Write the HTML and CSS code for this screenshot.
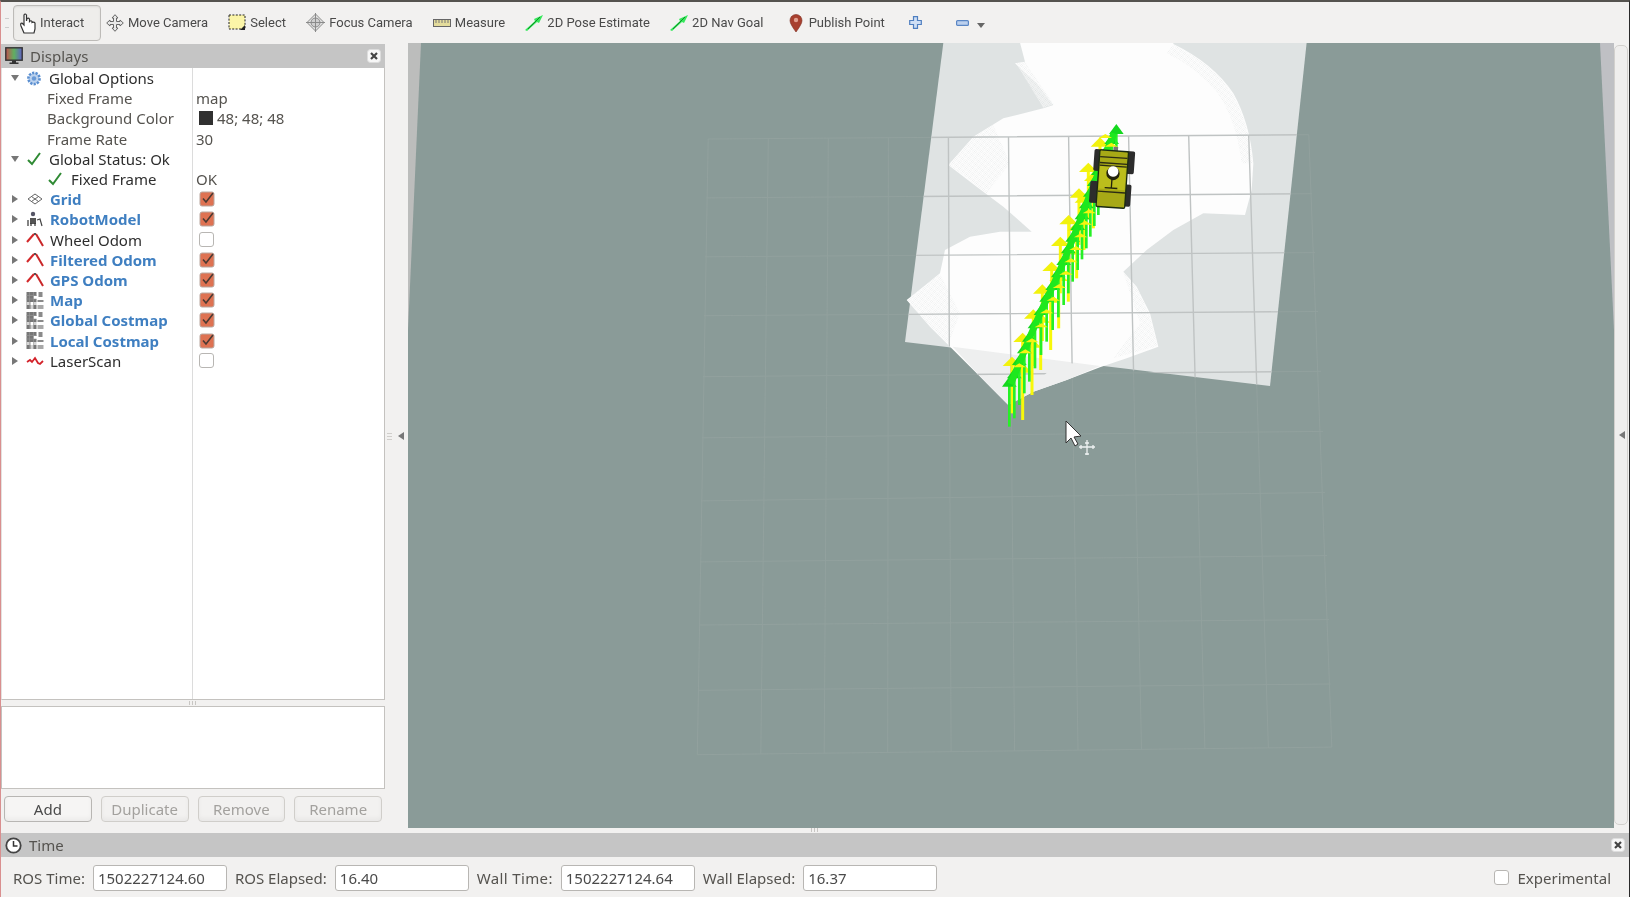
FILE: index.html
```html
<!DOCTYPE html>
<html lang="en">
<head>
    <meta charset="UTF-8">
    <title>RViz</title>
    <link rel="stylesheet" href="styles.css">
</head>
<body>
    <!-- shared icons -->
    <svg class="defs" width="0" height="0">
        <defs>
            <symbol id="i-odom" viewBox="0 0 18 16">
                <path d="M1 10 L8 2" stroke="#d3282a" stroke-width="2" fill="none"/>
                <path d="M10 2 L17 14" stroke="#c9282a" stroke-width="2" fill="none"/>
                <path d="M8 2 L10 2" stroke="#555" stroke-width="2"/>
            </symbol>
            <symbol id="i-map" viewBox="0 0 17 17">
                <path d="M0 0h10v4h-3v3h3v3h-6v3h6v4h-10z" fill="#777"/>
                <path d="M0 10h4v3h-4zM4 13h3v4h-3zM7 10h3v3h-3z" fill="#d4d4d4"/>
                <path d="M3 0v17M7 0v17M0 3.5h10M0 7h10" stroke="#999" stroke-width=".6"/>
                <path d="M12 0h4v5h-4zM11 8h6v2h-6z" fill="#8a8a8a"/>
                <path d="M11 13h6v4h-6z" fill="#a8a8a8"/>
            </symbol>
            <symbol id="i-check" viewBox="0 0 16 14">
                <path d="M2 8 L6 12 L14 1" stroke="#2f8a34" stroke-width="2" fill="none"/>
            </symbol>
            <symbol id="i-box" viewBox="0 0 16 16">
                <rect x="1" y="1" width="14" height="14" rx="2" fill="#de7252" stroke="#b9a79f"/>
                <path d="M4 7.5 L7 11 L14 2" stroke="#4b3a33" stroke-width="1.6" fill="none"/>
            </symbol>
            <symbol id="i-pose" viewBox="0 0 18 16">
                <path d="M0 15 L10 6 L9 4 L18 0 L14 8 L12 7 L2 16z" fill="#35e85a"/>
                <path d="M3 14 L15 2" stroke="#128a2a" stroke-width="1"/>
            </symbol>
            <symbol id="i-close" viewBox="0 0 14 14">
                <rect x="0.5" y="0.5" width="13" height="13" rx="3" fill="#f7f7f7" stroke="#ddd"/>
                <path d="M4 4 L10 10 M10 4 L4 10" stroke="#444" stroke-width="2.2"/>
            </symbol>
        </defs>
    </svg>

    <div class="app">
        <!-- Tool bar -->
        <div class="toolbar">
            <span class="grip"></span>
            <div class="tool tool-active">
                <svg width="18" height="22" viewBox="0 0 18 22"><path d="M5 21 L2 14 Q1 11 3 11 L5 13 L5 3 Q6 1 7.5 3 L7.5 9 L8 6.5 Q9.5 5.5 10.5 7 L10.5 9.5 Q12 8 13 9.5 L13 10.5 Q15 9.5 16 11 L16 17 L15 21z" fill="#fff" stroke="#333" stroke-width="1.2"/></svg>
                <span>Interact</span>
            </div>
            <div class="tool">
                <svg width="18" height="18" viewBox="0 0 18 18" fill="#e8e8e8" stroke="#666"><path d="M9 .7 L12 4 H10.5 V7.5 H14 V6 L17.3 9 L14 12 V10.5 H10.5 V14 H12 L9 17.3 L6 14 H7.5 V10.5 H4 V12 L.7 9 L4 6 V7.5 H7.5 V4 H6z"/></svg>
                <span>Move Camera</span>
            </div>
            <div class="tool">
                <svg width="18" height="17" viewBox="0 0 18 17"><rect x="1" y="1" width="16" height="14" fill="#fbf5a8" stroke="#222" stroke-dasharray="2 1.4"/><path d="M17 11v5h-5z" fill="#222"/></svg>
                <span>Select</span>
            </div>
            <div class="tool">
                <svg width="19" height="19" viewBox="0 0 19 19" fill="none" stroke="#8a8a8a"><path d="M9.5 1 L18 9.5 L9.5 18 L1 9.5z" fill="#e4e4e4"/><circle cx="9.5" cy="9.5" r="4.5" fill="#cfcfcf"/><path d="M9.5 0v19M0 9.5h19"/></svg>
                <span>Focus Camera</span>
            </div>
            <div class="tool">
                <svg width="18" height="10" viewBox="0 0 18 10"><rect x=".5" y="1.5" width="17" height="7" fill="#e4dc9c" stroke="#666"/><path d="M3 2v3M6 2v3M9 2v3M12 2v3M15 2v3" stroke="#777"/></svg>
                <span>Measure</span>
            </div>
            <div class="tool">
                <svg width="18" height="16"><use href="#i-pose"/></svg>
                <span>2D Pose Estimate</span>
            </div>
            <div class="tool">
                <svg width="18" height="16"><use href="#i-pose"/></svg>
                <span>2D Nav Goal</span>
            </div>
            <div class="tool tool-pin">
                <svg width="14" height="18" viewBox="0 0 14 18"><path d="M7 18 Q1 10 1 6.5 A6 6 0 0 1 13 6.5 Q13 10 7 18z" fill="#a8402f" stroke="#7c2a1f" stroke-width=".6"/><circle cx="7" cy="6" r="2.2" fill="#e0a090"/></svg>
                <span>Publish Point</span>
            </div>
            <svg class="tool-plus" width="13" height="13" viewBox="0 0 13 13"><path d="M4.5 .7h4v3.8h3.8v4h-3.8v3.8h-4v-3.8h-3.8v-4h3.8z" fill="#cfdff5" stroke="#4f7fc0" stroke-width="1.2"/></svg>
            <svg class="tool-minus" width="13" height="6" viewBox="0 0 13 6"><rect x=".6" y=".6" width="11.8" height="4.8" rx="1" fill="#bcd0ee" stroke="#5a86c4" stroke-width="1.2"/></svg>
            <span class="tool-caret"></span>
        </div>

        <div class="main">
            <!-- Displays panel -->
            <div class="dock">
                <div class="panel-title">
                    <svg width="18" height="18" viewBox="0 0 18 18">
                        <defs><linearGradient id="screen" x1="0" x2="1" y1="0" y2="0"><stop offset="0" stop-color="#c05050"/><stop offset=".5" stop-color="#60b060"/><stop offset="1" stop-color="#6060c8"/></linearGradient></defs>
                        <rect x=".8" y=".8" width="16.4" height="12.4" fill="url(#screen)" stroke="#333" stroke-width="1.4"/>
                        <path d="M7 13.5h4v2h2.5v1.5h-9v-1.5h2.5z" fill="#333"/>
                    </svg>
                    <span>Displays</span>
                    <svg class="close" width="14" height="14"><use href="#i-close"/></svg>
                </div>
                <div class="tree">
                    <div class="row">
                        <div class="name"><span class="exp exp-open"></span>
                            <svg class="ico" width="15" height="15" viewBox="0 0 15 15"><circle cx="7.5" cy="7.5" r="5.6" fill="#bcd2ee" stroke="#5b8fd0" stroke-width="2.6" stroke-dasharray="2.2 1.2"/><circle cx="7.5" cy="7.5" r="2.2" fill="#6a9ad6"/></svg>
                            <span class="label">Global Options</span></div>
                        <div class="value"></div>
                    </div>
                    <div class="row prop"><div class="name"><span class="label">Fixed Frame</span></div><div class="value">map</div></div>
                    <div class="row prop"><div class="name"><span class="label">Background Color</span></div><div class="value"><span class="swatch"></span>48; 48; 48</div></div>
                    <div class="row prop"><div class="name"><span class="label">Frame Rate</span></div><div class="value">30</div></div>
                    <div class="row">
                        <div class="name"><span class="exp exp-open"></span><svg class="ico" width="15" height="14"><use href="#i-check"/></svg><span class="label">Global Status: Ok</span></div>
                        <div class="value"></div>
                    </div>
                    <div class="row status">
                        <div class="name"><svg class="ico" width="15" height="14"><use href="#i-check"/></svg><span class="label">Fixed Frame</span></div>
                        <div class="value">OK</div>
                    </div>
                    <div class="row">
                        <div class="name"><span class="exp"></span>
                            <svg class="ico" width="16" height="12" viewBox="0 0 16 12" fill="none" stroke="#666"><path d="M8 1 L15 6 L8 11 L1 6z"/><path d="M4.5 3.5 L11.5 8.5M11.5 3.5 L4.5 8.5"/></svg>
                            <span class="label on">Grid</span></div>
                        <div class="value"><svg class="box" width="16" height="16"><use href="#i-box"/></svg></div>
                    </div>
                    <div class="row">
                        <div class="name"><span class="exp"></span>
                            <svg class="ico" width="16" height="16" viewBox="0 0 16 16"><circle cx="6" cy="3" r="2.2" fill="#556"/><rect x="3" y="7" width="6" height="6" fill="#555"/><path d="M1 15v-6M4 15v-3M8 15v-3" stroke="#333" stroke-width="1.2"/><path d="M10 9 L13 8 L15 15" stroke="#444" stroke-width="1.2" fill="none"/></svg>
                            <span class="label on">RobotModel</span></div>
                        <div class="value"><svg class="box" width="16" height="16"><use href="#i-box"/></svg></div>
                    </div>
                    <div class="row">
                        <div class="name"><span class="exp"></span><svg class="ico" width="18" height="16"><use href="#i-odom"/></svg><span class="label">Wheel Odom</span></div>
                        <div class="value"><span class="box-off"></span></div>
                    </div>
                    <div class="row">
                        <div class="name"><span class="exp"></span><svg class="ico" width="18" height="16"><use href="#i-odom"/></svg><span class="label on">Filtered Odom</span></div>
                        <div class="value"><svg class="box" width="16" height="16"><use href="#i-box"/></svg></div>
                    </div>
                    <div class="row">
                        <div class="name"><span class="exp"></span><svg class="ico" width="18" height="16"><use href="#i-odom"/></svg><span class="label on">GPS Odom</span></div>
                        <div class="value"><svg class="box" width="16" height="16"><use href="#i-box"/></svg></div>
                    </div>
                    <div class="row">
                        <div class="name"><span class="exp"></span><svg class="ico" width="17" height="17"><use href="#i-map"/></svg><span class="label on">Map</span></div>
                        <div class="value"><svg class="box" width="16" height="16"><use href="#i-box"/></svg></div>
                    </div>
                    <div class="row">
                        <div class="name"><span class="exp"></span><svg class="ico" width="17" height="17"><use href="#i-map"/></svg><span class="label on">Global Costmap</span></div>
                        <div class="value"><svg class="box" width="16" height="16"><use href="#i-box"/></svg></div>
                    </div>
                    <div class="row">
                        <div class="name"><span class="exp"></span><svg class="ico" width="17" height="17"><use href="#i-map"/></svg><span class="label on">Local Costmap</span></div>
                        <div class="value"><svg class="box" width="16" height="16"><use href="#i-box"/></svg></div>
                    </div>
                    <div class="row">
                        <div class="name"><span class="exp"></span>
                            <svg class="ico" width="18" height="10" viewBox="0 0 18 10"><path d="M1 6 L4 4 L6 6 L9 2 L12 7 L14 8 L17 5" stroke="#d3222a" stroke-width="1.8" fill="none"/></svg>
                            <span class="label">LaserScan</span></div>
                        <div class="value"><span class="box-off"></span></div>
                    </div>
                    <div class="tree-rest"><div class="name"></div></div>
                </div>
                <div class="hsplit"><span class="dots"></span></div>
                <div class="details"></div>
                <div class="buttons">
                    <button class="btn">Add</button>
                    <button class="btn" disabled>Duplicate</button>
                    <button class="btn" disabled>Remove</button>
                    <button class="btn" disabled>Rename</button>
                </div>
            </div>

            <div class="vsplit"><span class="dots-v"></span><span class="arrow-left"></span></div>

            <!-- 3D view -->
            <div class="view">
                <svg class="scene" viewBox="408 43 1206 785" width="1206" height="785">
                    <defs>
                        <clipPath id="seen-clip"><path d="M945 30 L1308 30 L1270 386 L1060 362 L1008 405 L948 345 L905 342z"/></clipPath>
                        <pattern id="dots" width="5" height="5" patternUnits="userSpaceOnUse" patternTransform="rotate(35)">
                            <rect width="5" height="5" fill="#fdfdfd"/>
                            <rect width="1.8" height="1.8" fill="#c6cccc"/>
                        </pattern>
                        <g id="grid">
                            <path d="M708.2 139L697.3 754.7M768.3 138.6L760.8 754M828.3 138.2L824.2 753.2M888.4 137.8L887.7 752.5M948.4 137.3L951.1 751.8M1008.5 136.9L1014.6 751M1068.6 136.5L1078 750.3M1128.6 136L1141.5 749.6M1188.7 135.6L1204.9 748.9M1248.7 135.2L1268.4 748.1M1308.8 134.7L1331.8 747.1"/>
                            <path d="M708.2 139L1308.8 134.7M706.5 197.9L1312 193.7M705 256.8L1315 252.6M704 315.7L1318 311.5M703 376.7L1321 371.3M702 437.8L1323 431.4M701 500.9L1325 492.5M700 561.9L1327 555.6M699 625L1329 619.6M698 690.3L1330.5 684M697.3 754.7L1331.8 747.1"/>
                        </g>
                        <g id="green">
                            <path d="M-4 20h8v130h-8z" fill="#26f026"/>
                            <path d="M0 0 L22 30 L-22 30z" fill="#14d81e"/>
                        </g>
                        <g id="yellow">
                            <path d="M-4.5 20h9v150h-9z" fill="#f8f80a"/>
                            <path d="M0 0 L28 28 L-28 28z" fill="#f2f20c"/>
                        </g>
                        <path id="step" d="M0 0 L20 12 L-20 12z" fill="#f4f410"/>
                    </defs>

                    <path class="edge" d="M408 43 H421 L408 330z"/>
                    <path class="edge edge-r" d="M1600 43 H1614 V330z"/>

                    <use href="#grid" class="grid-far"/>
                    <path class="map" d="M945 30 L1308 30 L1270 386 L905 342z"/>

                    <!-- traced in a zoomed coordinate space -->
                    <g transform="translate(880 30) scale(.33333)">
                        <path class="free" d="M410 0 L880 0 L880 42 Q1000 100 1060 190 Q1110 280 1120 400 L1115 480 L1095 555 L970 550 L880 600 L800 660 L730 725 L770 770 L810 850 L835 950 L740 985 L660 1012 L560 1050 L460 1085 L385 1125 L320 1060 L205 945 L150 890 L80 810 L130 770 L180 730 L195 660 L270 620 L360 605 L455 605 L370 530 L290 470 L205 405 L280 320 L370 265 L490 235 L520 225 L470 160 L405 100 L435 95z"/>
                        <path class="below" d="M218 950 L660 1008 L560 1050 L460 1085 L385 1125 L320 1060z"/>
                        <!-- dithered scan edges -->
                        <path class="fan" d="M207 405 L280 322 L340 285 L390 400 L320 490z"/>
                        <path class="fan" d="M82 810 L130 772 L180 732 L240 850 L205 943 L150 888z"/>
                        <path class="fan" d="M880 44 Q1000 102 1058 192 Q1108 282 1118 400 L1085 400 Q1070 280 1020 200 Q960 120 860 70z"/>
                        <path class="fan" d="M408 100 L436 97 L522 222 L490 233z"/>
                        <path class="fan" d="M730 728 L770 772 L808 852 L833 948 L700 985 L780 880z"/>
                    </g>

                    <use href="#grid" class="grid-near" clip-path="url(#seen-clip)"/>

                    <g transform="translate(880 30) scale(.33333)">
                        <!-- yellow poses, behind the green ones -->
                        <use href="#yellow" x="396" y="980"/>
                        <use href="#yellow" x="428" y="1000"/>
                        <use href="#yellow" x="428" y="908"/>
                        <use href="#yellow" x="456" y="925"/>
                        <use href="#yellow" x="460" y="838"/>
                        <use href="#yellow" x="482" y="850"/>
                        <use href="#yellow" x="487" y="763"/>
                        <use href="#yellow" x="512" y="790"/>
                        <use href="#yellow" x="515" y="695"/>
                        <use href="#yellow" x="536" y="725"/>
                        <use href="#yellow" x="541" y="620"/>
                        <use href="#yellow" x="565" y="645"/>
                        <use href="#yellow" x="566" y="555"/>
                        <use href="#yellow" x="590" y="575"/>
                        <use href="#yellow" x="597" y="475"/>
                        <use href="#yellow" x="612" y="490"/>
                        <use href="#yellow" x="625" y="398"/>
                        <use href="#yellow" x="640" y="425"/>
                        <use href="#yellow" x="660" y="322"/>

                        <!-- green poses -->
                        <use href="#green" x="388" y="1040"/>
                        <use href="#green" x="403" y="1015"/>
                        <use href="#green" x="418" y="975"/>
                        <use href="#green" x="433" y="940"/>
                        <use href="#green" x="448" y="905"/>
                        <use href="#green" x="465" y="865"/>
                        <use href="#green" x="483" y="825"/>
                        <use href="#green" x="500" y="785"/>
                        <use href="#green" x="518" y="750"/>
                        <use href="#green" x="535" y="712"/>
                        <use href="#green" x="551" y="675"/>
                        <use href="#green" x="565" y="640"/>
                        <use href="#green" x="578" y="605"/>
                        <use href="#green" x="593" y="570"/>
                        <use href="#green" x="606" y="538"/>
                        <use href="#green" x="619" y="505"/>
                        <use href="#green" x="631" y="470"/>
                        <use href="#green" x="643" y="438"/>
                        <use href="#green" x="655" y="405"/>
                        <use href="#green" x="668" y="375"/>
                        <use href="#green" x="681" y="342"/>
                        <use href="#green" x="695" y="312"/>
                        <use href="#green" x="709" y="282"/>
                        <path class="band" d="M392 1062 L420 995 L450 920 L485 840 L520 765 L553 690 L595 585 L633 485 L670 390 L702 310"/>

                        <!-- yellow steps on the right of the band -->
                        <use href="#step" x="418" y="1000"/>
                        <use href="#step" x="436" y="958"/>
                        <use href="#step" x="456" y="925"/>
                        <use href="#step" x="484" y="880"/>
                        <use href="#step" x="500" y="838"/>
                        <use href="#step" x="520" y="800"/>
                        <use href="#step" x="538" y="762"/>
                        <use href="#step" x="558" y="722"/>
                        <use href="#step" x="573" y="685"/>
                        <use href="#step" x="588" y="648"/>
                        <use href="#step" x="602" y="610"/>
                        <use href="#step" x="616" y="572"/>
                        <use href="#step" x="628" y="538"/>
                        <use href="#step" x="694" y="338"/>
                        <use href="#step" x="676" y="312"/>

                        <!-- robot -->
                        <g transform="rotate(4 692 445)">
                            <rect x="638" y="360" width="30" height="66" rx="5" fill="#2c2c2c"/>
                            <rect x="730" y="360" width="30" height="68" rx="5" fill="#2c2c2c"/>
                            <rect x="632" y="456" width="30" height="66" rx="5" fill="#2c2c2c"/>
                            <rect x="726" y="460" width="30" height="66" rx="5" fill="#2c2c2c"/>
                            <rect x="694" y="350" width="14" height="16" fill="#777"/>
                            <rect x="654" y="362" width="86" height="170" rx="4" fill="#a7a916" stroke="#1a2a12" stroke-width="4"/>
                            <rect x="658" y="410" width="78" height="68" fill="#bcbe1c"/>
                            <path d="M656 382h82M656 400h82M656 408h82M656 486h82" stroke="#2b2b14" stroke-width="4"/>
                            <path d="M696 440v36M676 474h38" stroke="#22220c" stroke-width="4"/>
                            <circle cx="698" cy="430" r="20" fill="#24240f"/>
                            <circle cx="698" cy="424" r="16" fill="#fff"/>
                        </g>
                    </g>

                    <!-- mouse cursor and move hint -->
                    <path class="cursor" d="M1066 421 V443 L1071 438 L1075 446 L1078 444 L1074 437 L1081 436z"/>
                    <g class="hint">
                        <path d="M1079 447h16M1087 440v15M1085 443h4M1085 454h4M1081 445v4M1093 445v4"/>
                    </g>
                </svg>
            </div>

            <div class="right-strip"><span class="strip-btn"><span class="arrow-right"></span></span></div>
        </div>

        <div class="bottom-split"><span class="dots"></span></div>

        <!-- Time panel -->
        <div class="time">
            <div class="panel-title">
                <svg width="17" height="17" viewBox="0 0 17 17"><circle cx="8.5" cy="8.5" r="7.2" fill="#fff" stroke="#444" stroke-width="1.8"/><path d="M8.5 4v5h4" stroke="#333" stroke-width="1.5" fill="none"/></svg>
                <span>Time</span>
                <svg class="close" width="14" height="14"><use href="#i-close"/></svg>
            </div>
            <div class="time-row">
                <label>ROS Time:</label><input class="field" value="1502227124.60">
                <label>ROS Elapsed:</label><input class="field" value="16.40">
                <label class="wall-label">Wall Time:</label><input class="field" value="1502227124.64">
                <label>Wall Elapsed:</label><input class="field" value="16.37">
                <span class="experimental"><span class="box-off"></span>Experimental</span>
            </div>
        </div>
    </div>
</body>
</html>
```

FILE: styles.css
```css
* {
    box-sizing: border-box;
}

body {
    margin: 0;
    background-color: #f2f1f0;
    font-family: "Noto Sans", Arial, sans-serif;
    font-size: 15px;
    color: #3c3c3c;
    overflow: hidden;
}

.defs {
    position: absolute;
}

.app {
    width: 1630px;
    height: 897px;
    display: flex;
    flex-direction: column;
    border-top: 2px solid #55534f;
    border-left: 1px solid #d98f8f;
    border-right: 1px solid #2a2a2a;
    filter: blur(0.35px);
}

/* tool bar */
.toolbar {
    height: 41px;
    display: flex;
    align-items: center;
    padding-left: 4px;
    flex-shrink: 0;
    font-family: Roboto, Arial, sans-serif;
    font-size: 13px;
}

.grip {
    width: 4px;
    height: 10px;
    margin-right: 4px;
    border-top: 1px solid #ccc;
    border-bottom: 1px solid #ccc;
}

.tool {
    display: flex;
    align-items: center;
    gap: 4px;
    margin-right: 20.2px;
    color: #4a4a4a;
    white-space: nowrap;
}

.tool-active {
    width: 88px;
    height: 36px;
    margin-right: 5px;
    padding-left: 5px;
    gap: 3px;
    background-color: #eeedeb;
    border: 1px solid #bdbbb8;
    border-radius: 4px;
    box-shadow: inset 0 1px 2px rgba(0, 0, 0, 0.08);
}

.tool-pin {
    gap: 6px;
    margin-left: 5px;
}

.tool-plus {
    margin-left: 4px;
}

.tool-minus {
    margin-left: 34px;
}

.tool-caret {
    margin-left: 8px;
    margin-top: 6px;
    border-left: 4px solid transparent;
    border-right: 4px solid transparent;
    border-top: 5px solid #666;
}

/* main row */
.main {
    height: 785px;
    display: flex;
    flex-shrink: 0;
}

.dock {
    width: 384px;
    display: flex;
    flex-direction: column;
    padding-top: 1px;
}

.panel-title {
    height: 24px;
    flex-shrink: 0;
    display: flex;
    align-items: center;
    gap: 7px;
    padding-left: 4px;
    padding-right: 4px;
    background-color: #c5c5c5;
    color: #55534f;
}

.panel-title .close {
    margin-left: auto;
}

.tree {
    flex: 1;
    display: flex;
    flex-direction: column;
    background-color: white;
    border-right: 1px solid #c4c2bf;
    border-bottom: 1px solid #c4c2bf;
    border-left: 1px solid #e4e2e0;
    overflow: hidden;
}

.row {
    height: 20.2px;
    display: flex;
    flex-shrink: 0;
    color: #2e2e2e;
}

.name {
    width: 191px;
    display: flex;
    align-items: center;
    flex-shrink: 0;
    padding-left: 9px;
    border-right: 1px solid #dcdcdc;
    white-space: nowrap;
}

.exp {
    width: 0;
    height: 0;
    margin-right: 10px;
    border-top: 4px solid transparent;
    border-bottom: 4px solid transparent;
    border-left: 6px solid #777;
    margin-left: 1px;
}

.exp-open {
    margin-left: 0;
    margin-right: 8px;
    border-left: 4.5px solid transparent;
    border-right: 4.5px solid transparent;
    border-top: 6px solid #777;
    border-bottom: 0;
}

.ico {
    width: 18px;
    flex-shrink: 0;
    margin-left: -2px;
    margin-right: 6px;
}

.prop .name {
    padding-left: 45px;
}

.prop .label {
    color: #55534f;
}

.status .name {
    padding-left: 46px;
}

.status .ico {
    margin-right: 7px;
}

.label.on {
    color: #3f7fc1;
    font-weight: 700;
}

.value {
    padding-left: 3px;
    display: flex;
    align-items: center;
    color: #55534f;
}

.swatch {
    width: 14px;
    height: 14px;
    margin: 0 4px 0 3px;
    background-color: #303030;
}

.box {
    margin-left: 3px;
}

.box-off {
    width: 15px;
    height: 15px;
    margin-left: 3px;
    background-color: white;
    border: 1px solid #b8b6b3;
    border-radius: 3px;
}

.tree-rest {
    flex: 1;
    display: flex;
}

.hsplit {
    height: 6px;
    flex-shrink: 0;
    display: flex;
    justify-content: center;
    align-items: center;
}

.dots {
    width: 9px;
    height: 4px;
    background-image: repeating-linear-gradient(90deg, #c8c6c3 0 1px, transparent 1px 3px);
}

.details {
    height: 83px;
    flex-shrink: 0;
    background-color: white;
    border: 1px solid #c4c2bf;
}

.buttons {
    display: flex;
    gap: 9px;
    padding: 7px 3px 6px 3px;
}

.btn {
    width: 88px;
    height: 26px;
    padding: 0;
    font: inherit;
    color: #4a4a4a;
    background-color: #f6f5f4;
    border: 1px solid #b8b6b3;
    border-radius: 4px;
    box-shadow: inset 0 -3px 4px rgba(0, 0, 0, 0.04);
}

.btn:disabled {
    color: #a3a19e;
    border-color: #d0ceca;
    background-color: #f2f1f0;
}

.vsplit {
    width: 23px;
    display: flex;
    align-items: center;
    padding-left: 2px;
    gap: 6px;
    flex-shrink: 0;
}

.dots-v {
    width: 5px;
    height: 9px;
    background-image: repeating-linear-gradient(0deg, #d0cecb 0 1px, transparent 1px 3px);
}

.arrow-left {
    border-top: 4px solid transparent;
    border-bottom: 4px solid transparent;
    border-right: 6px solid #777;
}

.view {
    width: 1206px;
    background-color: #8a9b98;
    flex-shrink: 0;
    overflow: hidden;
}

.scene {
    display: block;
}

.edge {
    fill: #bcbdbc;
}

.edge-r {
    fill: #bfc0c4;
}

.map {
    fill: #dfe3e3;
}

.free {
    fill: #fdfdfd;
}

.below {
    fill: #eeefef;
}

.fan {
    fill: url(#dots);
    fill-opacity: 0.6;
}

.band {
    fill: none;
    stroke: #1ee81e;
    stroke-width: 20;
}

.grid-far {
    fill: none;
    stroke: #92a19e;
    stroke-width: 1;
}

.grid-near {
    fill: none;
    stroke: #bfc3c3;
    stroke-width: 1.4;
}

.cursor {
    fill: #fff;
    stroke: #333;
    stroke-width: 1;
}

.hint {
    fill: none;
    stroke: #eef2f2;
    stroke-width: 1.3;
}

.right-strip {
    flex: 1;
    padding-top: 2px;
}

.strip-btn {
    display: flex;
    align-items: center;
    justify-content: flex-end;
    padding-right: 2px;
    width: 14px;
    height: 780px;
    border: 1px solid #d2d0cd;
    border-radius: 5px;
    background-color: #efeeed;
}

.arrow-right {
    border-top: 4px solid transparent;
    border-bottom: 4px solid transparent;
    border-right: 6px solid #777;
}

.bottom-split {
    height: 5px;
    flex-shrink: 0;
    display: flex;
    justify-content: center;
}

/* time panel */
.time {
    flex: 1;
    display: flex;
    flex-direction: column;
}

.time-row {
    flex: 1;
    display: flex;
    align-items: center;
    gap: 8px;
    padding-top: 1px;
    padding-left: 12px;
    padding-right: 18px;
    color: #55534f;
    white-space: nowrap;
}

.wall-label {
    letter-spacing: 0.35px;
}

.field {
    width: 134px;
    height: 26px;
    padding: 0 4px;
    font: inherit;
    color: #4a4a4a;
    background-color: white;
    border: 1px solid #b8b6b3;
    border-radius: 3px;
}

.experimental {
    margin-left: auto;
    display: flex;
    align-items: center;
    gap: 9px;
}
```
